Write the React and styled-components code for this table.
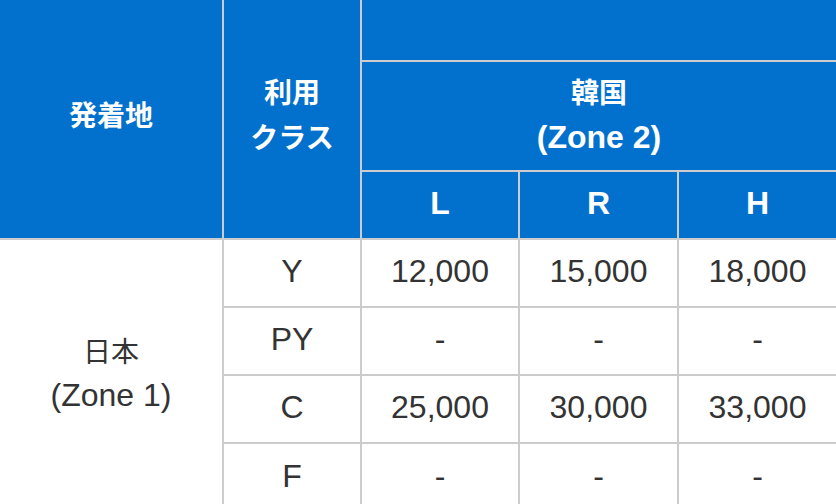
import React from 'react';
import styled, { createGlobalStyle } from 'styled-components';

const GlobalStyle = createGlobalStyle`
  html, body {
    margin: 0;
    padding: 0;
    background: #ffffff;
  }
  body {
    font-family: "Liberation Sans", "Noto Sans CJK JP", sans-serif;
  }
`;

const FareTable = styled.table`
  width: 836px;
  border-collapse: collapse;
  border-style: hidden;
  table-layout: fixed;
  font-size: 32px;
  line-height: 42px;
`;

const HeadCell = styled.th`
  background: #0271cd;
  color: #ffffff;
  font-weight: 700;
  text-align: center;
  vertical-align: middle;
  padding: 0 0 ${(p) => (p.$stack ? 6 : 4)}px;
  border: 2px solid #cccccc;
  line-height: ${(p) => (p.$stack ? 41 : 42)}px;
`;

const BodyCell = styled.td`
  color: #333333;
  font-weight: 400;
  text-align: center;
  vertical-align: middle;
  padding: 0 0 ${(p) => (p.$stack ? 6 : 4)}px;
  border: 2px solid #cccccc;
  line-height: ${(p) => (p.$stack ? 41 : 42)}px;
`;

// Japanese glyphs sit a little smaller and higher than the Latin ones
const Kana = styled.span`
  font-family: "Noto Sans CJK JP", sans-serif;
  font-size: 28px;
  vertical-align: 3px;
`;

const Row = styled.tr`
  height: ${(p) => p.$h}px;
`;

const rows = [
  { cls: 'Y', fares: ['12,000', '15,000', '18,000'] },
  { cls: 'PY', fares: ['-', '-', '-'] },
  { cls: 'C', fares: ['25,000', '30,000', '33,000'] },
  { cls: 'F', fares: ['-', '-', '-'] },
];

export default function App() {
  return (
    <>
      <GlobalStyle />
      <FareTable>
        <colgroup>
          <col style={{ width: 223 }} />
          <col style={{ width: 138 }} />
          <col style={{ width: 158 }} />
          <col style={{ width: 159 }} />
          <col style={{ width: 158 }} />
        </colgroup>
        <thead>
          <Row $h={61}>
            <HeadCell rowSpan={3} $stack>
              <Kana>発着地</Kana>
            </HeadCell>
            <HeadCell rowSpan={3} $stack>
              <Kana>利用</Kana>
              <br />
              <Kana>クラス</Kana>
            </HeadCell>
            <HeadCell colSpan={3} />
          </Row>
          <Row $h={110}>
            <HeadCell colSpan={3}>
              <Kana>韓国</Kana>
              <br />
              (Zone 2)
            </HeadCell>
          </Row>
          <Row $h={68}>
            <HeadCell>L</HeadCell>
            <HeadCell>R</HeadCell>
            <HeadCell>H</HeadCell>
          </Row>
        </thead>
        <tbody>
          {rows.map((r, i) => (
            <Row $h={68} key={r.cls}>
              {i === 0 && (
                <BodyCell rowSpan={4} $stack>
                  <Kana>日本</Kana>
                  <br />
                  (Zone 1)
                </BodyCell>
              )}
              <BodyCell>{r.cls}</BodyCell>
              {r.fares.map((f, j) => (
                <BodyCell key={j}>{f}</BodyCell>
              ))}
            </Row>
          ))}
        </tbody>
      </FareTable>
    </>
  );
}
